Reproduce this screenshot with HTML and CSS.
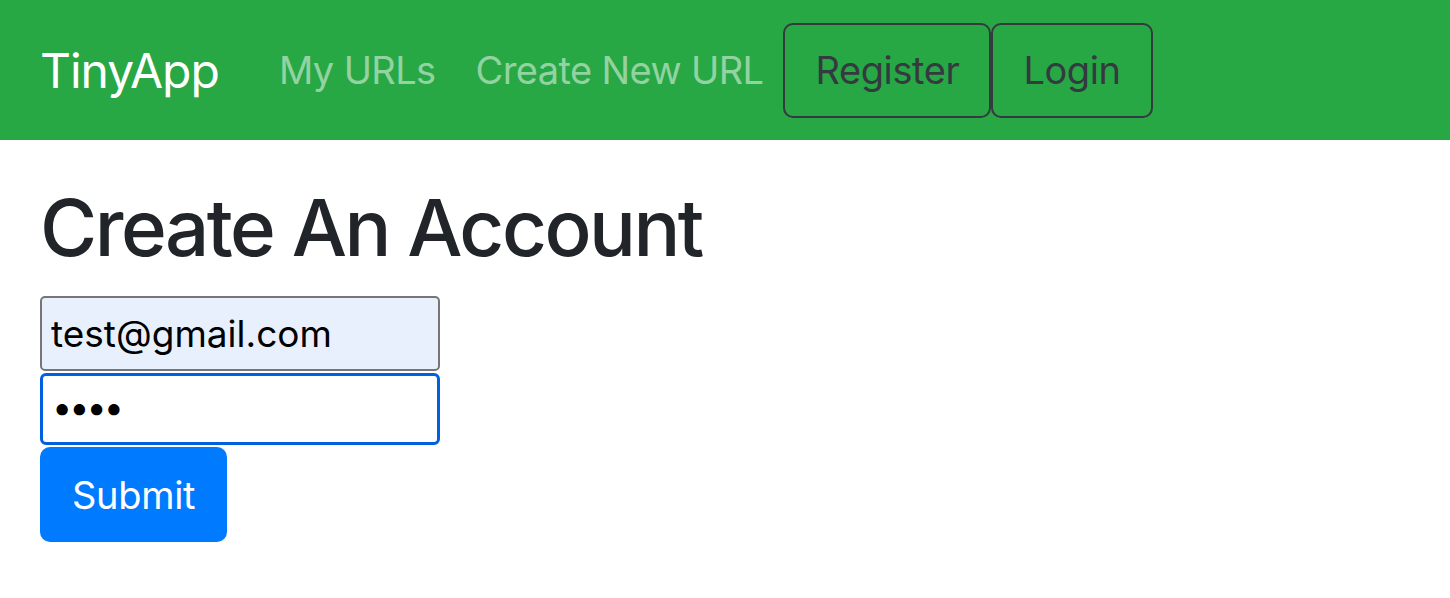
FILE: index.html
```html
<!DOCTYPE html>
<html>
<head>
<meta charset="utf-8">
<title>TinyApp</title>
<link rel="stylesheet" href="styles.css">
</head>
<body>
<nav class="navbar">
  <a class="brand" href="#">TinyApp</a>
  <a class="nav-link" href="#">My URLs</a>
  <a class="nav-link" href="#">Create New URL</a>
  <a class="btn-outline" href="#">Register</a>
  <a class="btn-outline" href="#">Login</a>
</nav>
<main class="content">
  <h1 class="title">Create An Account</h1>
  <form class="form">
    <input class="field field-auto" type="text" value="test@gmail.com">
    <div class="field field-focus"><span class="dots">••••</span></div>
    <button class="btn-submit" type="button">Submit</button>
  </form>
</main>
</body>
</html>
```
FILE: styles.css
```css
* { box-sizing: border-box; }
body {
  margin: 0;
  font-family: Inter, "Noto Sans", "Liberation Sans", sans-serif;
  color: #212529;
  background: #fff;
}
.navbar {
  background: #28a745;
  height: 140px;
  padding: 20px 40px;
  display: flex;
  align-items: center;
}
.brand {
  color: #fff;
  font-size: 48px;
  text-decoration: none;
  margin-right: 40px;
  letter-spacing: -1px;
}
.nav-link {
  color: rgba(255,255,255,0.5);
  font-size: 38px;
  padding: 0 20px;
  text-decoration: none;
  letter-spacing: -0.6px;
}
.btn-outline {
  color: #343a40;
  font-size: 38px;
  text-decoration: none;
  border: 2.5px solid #343a40;
  border-radius: 10px;
  height: 95px;
  padding: 0 30px;
  display: flex;
  align-items: center;
  letter-spacing: -0.4px;
}
.content {
  padding: 40px 40px 0;
}
.title {
  margin: 0 0 20px;
  font-size: 78px;
  font-weight: 500;
  line-height: 96px;
  letter-spacing: -2.5px;
}
.form {
  display: flex;
  flex-direction: column;
  align-items: flex-start;
  gap: 2px;
}
.field {
  width: 400px;
  font-family: inherit;
  font-size: 37px;
  color: #000;
  margin: 0;
}
.field-auto {
  height: 75px;
  background: #e8f0fe;
  border: 2px solid #767676;
  border-radius: 5px;
  padding: 0 9px;
  outline: none;
}
.field-focus {
  height: 72px;
  border: 3px solid #0060df;
  border-radius: 6px;
  display: flex;
  align-items: center;
  padding: 0 9px 4px;
}
.dots {
  font-size: 36px;
  letter-spacing: -3px;
}
.btn-submit {
  background: #007bff;
  color: #fff;
  border: none;
  border-radius: 10px;
  font-family: inherit;
  font-size: 38px;
  height: 95px;
  padding: 0 32px;
  letter-spacing: -0.3px;
}
```
